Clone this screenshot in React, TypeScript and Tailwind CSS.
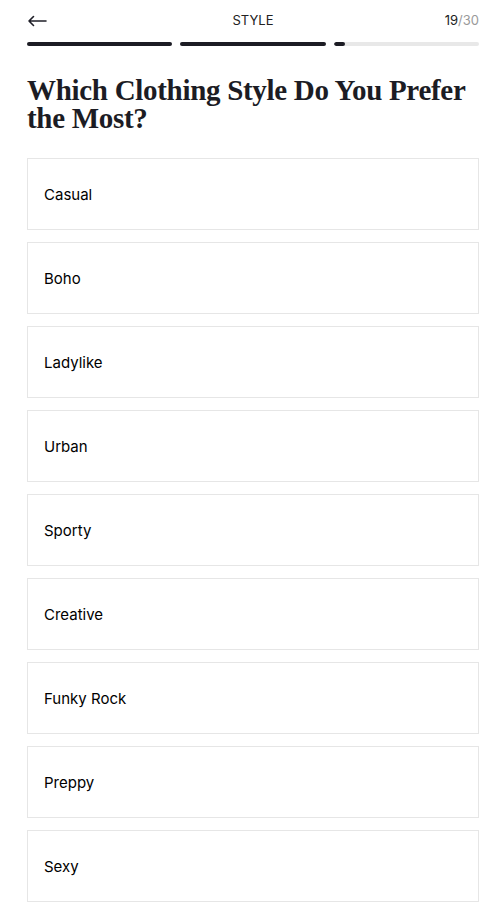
import React from "react";

const options = ["Casual", "Boho", "Ladylike", "Urban", "Sporty", "Creative", "Funky Rock", "Preppy", "Sexy"];

export default function App() {
  return (
    <div className="min-h-[905px] w-[492px] bg-white pl-[27px] pr-[13px]" style={{ fontFamily: "Inter, 'Liberation Sans', sans-serif" }}>
      <div className="relative flex h-[40px] items-center justify-between">
        <svg width="20" height="12" viewBox="0 0 20 12" className="mt-[1px]">
          <path d="M19 6H2M6.5 1.5L2 6l4.5 4.5" stroke="#1f1f28" strokeWidth="1.6" fill="none" strokeLinecap="round" strokeLinejoin="round" />
        </svg>
        <div className="absolute left-1/2 top-[12px] -translate-x-1/2 text-[13px] leading-[16px] text-[#222]">STYLE</div>
        <div className="text-[13px] leading-[16px] text-[#222]">
          19<span className="text-[#9a9a9a]">/30</span>
        </div>
      </div>
      <div className="mt-[2px] flex gap-[8px]">
        <div className="h-[4px] flex-1 rounded-full bg-[#1c1c24]" />
        <div className="h-[4px] flex-1 rounded-full bg-[#1c1c24]" />
        <div className="h-[4px] flex-1 overflow-hidden rounded-full bg-[#e8e8e8]">
          <div className="h-full w-[11px] rounded-full bg-[#1c1c24]" />
        </div>
      </div>
      <h1 className="mt-[30px] text-[29px] font-bold leading-[28px] tracking-[-0.3px] text-[#1c1c24]" style={{ fontFamily: "'Liberation Serif', serif" }}>
        Which Clothing Style Do You Prefer the Most?
      </h1>
      <div className="mt-[26px] flex flex-col gap-[12px]">
        {options.map((o) => (
          <div key={o} className="flex h-[72px] items-center border border-[#e6e6e6] pl-[16px] pt-[2px] text-[15px] text-black">
            {o}
          </div>
        ))}
      </div>
    </div>
  );
}
